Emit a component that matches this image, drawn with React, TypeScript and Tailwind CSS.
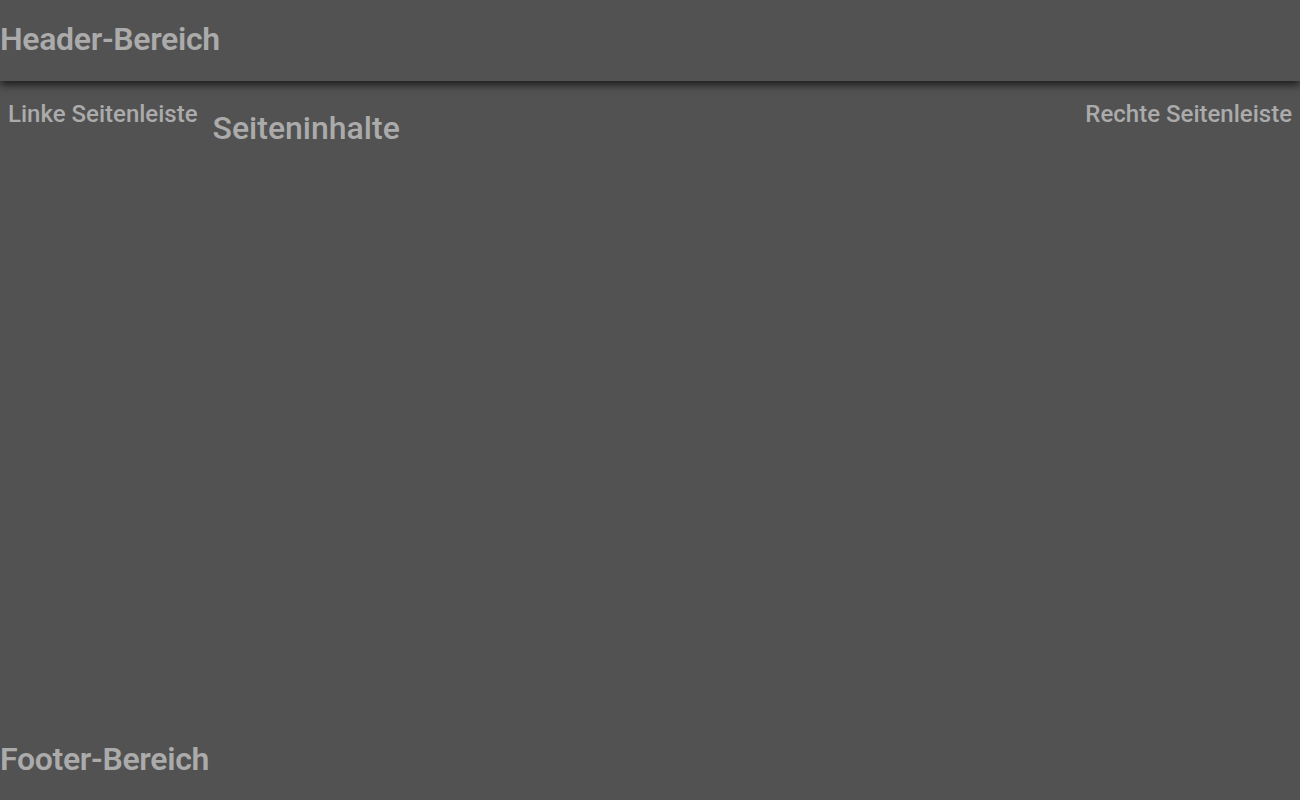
export default function App() {
  return (
    <div
      className="flex h-[800px] flex-col bg-[#525252] text-[#ababab]"
      style={{ fontFamily: "Roboto, 'Liberation Sans', sans-serif" }}
    >
      <header className="relative z-10 flex h-[81px] shrink-0 items-center bg-[#525252] pb-[3px] shadow-[0_4px_8px_rgba(0,0,0,0.65)]">
        <h1 className="text-[32px] font-semibold leading-none tracking-[-0.01em]">Header-Bereich</h1>
      </header>
      <div className="flex flex-1">
        <aside className="px-2 pt-[21px]">
          <h3 className="text-[24px] font-medium leading-none">Linke Seitenleiste</h3>
        </aside>
        <main className="flex-1 pl-[7px] pr-2 pt-[31px]">
          <h2 className="text-[32px] font-medium leading-none">Seiteninhalte</h2>
        </main>
        <aside className="px-2 pt-[21px]">
          <h3 className="text-[24px] font-medium leading-none">Rechte Seitenleiste</h3>
        </aside>
      </div>
      <footer className="flex h-[82px] shrink-0 items-center">
        <h1 className="text-[32px] font-semibold leading-none tracking-[-0.01em]">Footer-Bereich</h1>
      </footer>
    </div>
  );
}
